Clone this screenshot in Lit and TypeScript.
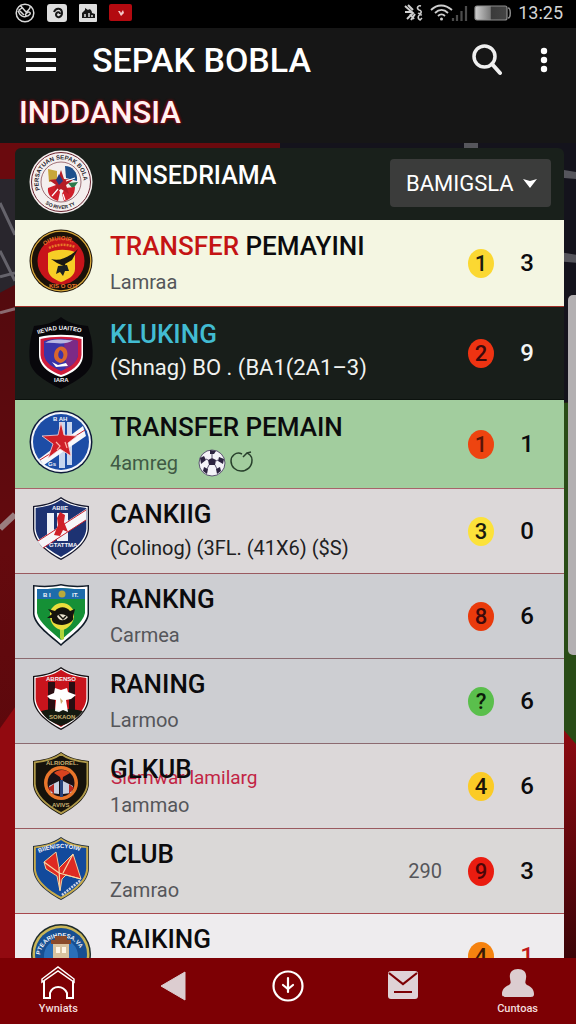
import { LitElement, html, svg, css, nothing, TemplateResult } from "lit";
import { customElement, property } from "lit/decorators.js";

type CrestKind =
  | "star" | "sun" | "night" | "north" | "sash"
  | "green" | "red" | "ember" | "wing" | "tower";

interface Entry {
  name: string;
  lead?: string;
  sub?: string;
  overlay?: string;
  extra?: string;
  ball?: boolean;
  crest: CrestKind;
  tone: string;
  rank: string;
  color: string;
  ink: string;
  score: string;
}

const SHIELD = "M32 2C24 8 13 10 4 11V34C5 48 19 58 32 65C45 58 59 48 60 34V11C51 10 40 8 32 2Z";
const BIG_SHIELD = "M32 0C25 6 15 8 5 9L2 20C0 30 0 38 1 46C4 58 20 66 32 72C44 66 60 58 63 46C64 38 64 30 62 20L59 9C49 8 39 6 32 0Z";

const CRESTS: Record<CrestKind, TemplateResult> = {
  star: svg`
    <circle cx="32" cy="34" r="31.5" fill="#f4efee"/>
    <circle cx="32" cy="34" r="29.5" fill="none" stroke="#6b2430" stroke-width="1"/>
    <circle cx="32" cy="34" r="20" fill="none" stroke="#7a3a44" stroke-width=".7"/>
    <path id="ring-top" d="M11 42A22.500 22.500 0 1 1 53 42" fill="none"/>
    <text class="ring dark"><textPath href="#ring-top">PERSATUAN SEPAK BOLA</textPath></text>
    <path id="ring-low" d="M14 54A27 27 0 0 0 50 54" fill="none"/>
    <text class="ring dark small"><textPath href="#ring-low" startOffset="3">SO RIVER TY</textPath></text>
    <path d="M19 21L28 23L28 32L20 34Z" fill="#c7a63a"/>
    <path d="M36 18C43 18 49 24 48 33L37 30Z" fill="#1c4f8c"/>
    <path d="M39 35L49 34L44 41Z" fill="#2c7a4a"/>
    <path d="M19 40L27 37L31 44L29 53C22 51 18 46 19 40Z" fill="#cf1f2a"/>
    <path d="M36 40L46 39C46 47 41 52 35 53L33 46Z" fill="#cf1f2a"/>
    <path d="M32 22L35 31L44 32L37 37L40 46L32 41L24 46L27 37L20 32L29 31Z" fill="#b51c26"/>
    <path d="M30 26L34 33L30 37L27 32Z" fill="#23387c"/>
    <path d="M37 33L46 30M23 48L29 41M34 46L36 52" stroke="#fff" stroke-width="1.200"/>`,
  sun: svg`
    <circle cx="32" cy="34" r="31.500" fill="#1b1209"/>
    <circle cx="32" cy="34" r="29.800" fill="none" stroke="#d8a83a" stroke-width="1.300"/>
    <circle cx="32" cy="34" r="23.500" fill="#c8141a"/>
    <path id="sun-arc" d="M14 20A27 27 0 0 1 52 22" fill="none"/>
    <text class="ring orange"><textPath href="#sun-arc" startOffset="2">OIMUIOIR.</textPath></text>
    <path d="M20 21C28 17 38 17 46 20" stroke="#e87a28" stroke-width="2.500" fill="none" stroke-dasharray="2 1"/>
    <path d="M19 26C27 22 38 22 46 25V42C46 49 38 53 32 55C26 53 19 49 19 42Z" fill="#f7ce26"/>
    <path d="M22 32C30 34 38 32 49 22L43 33L36 37L37 40L28 36Z" fill="#191812"/>
    <path d="M29 39L38 38L40 44L36 44L34 49L31 45L27 47Z" fill="#1c2222"/>
    <text class="ring orange" x="20" y="61">KIS O OTI</text>`,
  night: svg`
    <path d="${BIG_SHIELD}" fill="#08070b"/>
    <path d="M10 20C22 17 42 17 54 20V38C54 50 42 57 32 60C22 57 10 50 10 38Z" fill="#fff"/>
    <path d="M11.500 22C24 19 40 19 52.500 22V38C52 48 41 55 32 58C23 55 12 48 11.500 38Z" fill="#d01c3c"/>
    <path d="M15 24C25 21 39 21 49 24V38C48 46 39 51 32 54C25 51 16 46 15 38Z" fill="#3a33a8"/>
    <path d="M36 22C42 22 46 23 49 24V38C48 45 41 50 36 52C40 42 33 34 36 22Z" fill="#7c2a86"/>
    <path d="M16 26C24 20 36 24 44 23C36 29 25 25 16 26Z" fill="#b8b6e2"/>
    <path d="M26 34C29 28 36 28 38 34C40 41 35 46 31 46C25 44 24 39 26 34ZM31 33C28 37 29 42 33 42C36 38 34 34 31 33Z" fill="#d9662c"/>
    <path d="M23 45L29 48L37 46L39 49L27 50Z" fill="#fff"/>
    <path id="night-top" d="M7 18Q32 8 60 18" fill="none"/>
    <text class="ring white"><textPath href="#night-top" startOffset="2">IIEVAD UAITEO</textPath></text>
    <text class="ring white" x="25" y="65">IARA</text>`,
  north: svg`
    <circle cx="32" cy="34" r="31.500" fill="#0d1a3a"/>
    <circle cx="32" cy="34" r="30" fill="#f4f6fa"/>
    <circle cx="32" cy="34" r="28" fill="#1d4da6"/>
    <path d="M30 14H36V60H30ZM38 14H43V57H38Z" fill="#e8eefa" opacity=".85"/>
    <path d="M10 51L54 18L57 28L15 57Z" fill="#f8f8fb"/>
    <path d="M11 52L27 42M40 32L56 22" stroke="#c8202c" stroke-width="1"/>
    <path d="M32 14L35 27L48 28L39 35L42 48L31 41L19 50L24 36L13 28L29 27Z" fill="#cf1f28" stroke="#f4d8dc" stroke-width=".8"/>
    <path d="M27 34L31 38L28 42M36 34L38 40" stroke="#ffb3a8" stroke-width="1.200" fill="none"/>
    <text class="ring white" x="24" y="13">B AH</text>
    <text class="ring white" x="19" y="58">Gs</text>`,
  sash: svg`
    <path d="${SHIELD}" fill="#14162c"/>
    <path d="${SHIELD}" fill="#fff" transform="translate(1.500 1.500) scale(.953)"/>
    <path d="${SHIELD}" fill="#1d3272" transform="translate(3 3) scale(.906)"/>
    <path d="M18 18H25V44H18ZM28 18H39V46H28Z" fill="#eef1f8"/>
    <path d="M8 46L57 14V25L14 53Z" fill="#f7f5f8"/>
    <path d="M9 46L57 15M14 53L57 25" stroke="#c8202c" stroke-width="1"/>
    <path d="M31 17L36 20L35 27L39 37L34 35L31 41L25 40L29 30L28 23Z" fill="#cf1f28"/>
    <text class="ring white" x="23" y="15">ABIIE</text>
    <text class="ring white" x="20" y="52">GTATTMA</text>`,
  green: svg`
    <path d="M32 4C23 6 13 6 4 5V34C5 46 22 57 32 66C42 57 59 46 60 34V5C51 6 41 6 32 4Z" fill="#101b28"/>
    <path d="M32 5.500C23 7.500 13 7.500 5.500 6.500V34C7 45 22 55 32 64C42 55 57 45 58.500 34V6.500C51 7.500 41 7.500 32 5.500Z" fill="#fff"/>
    <path d="M32 8C23 9 14 9 8 9V33C10 43 23 52 32 60C41 52 54 43 56 33V9C50 9 41 9 32 8Z" fill="#159036"/>
    <path d="M32 8C23 9 14 9 8 9V19H56V9C50 9 41 9 32 8Z" fill="#1d6cab"/>
    <circle cx="33" cy="14" r="3.500" fill="#b7a93b"/>
    <text class="ring white" x="14" y="17">B I</text>
    <text class="ring white" x="43" y="17">IT.</text>
    <path d="M31 46L35 46V59L33 60L31 58Z" fill="#b0d43a"/>
    <path d="M33 23C40 23 46 29 45 36C45 43 39 49 33 50C26 49 21 43 21 36C20 29 26 23 33 23Z" fill="#e9dd3c"/>
    <path d="M19 29L26 31C30 26 37 26 41 31L46 29L44 37C46 41 38 45 33 45C25 45 22 41 23 38L18 38L23 34Z" fill="#15140d"/>
    <path d="M28 36C31 33 36 34 39 37C35 42 30 41 28 36Z" fill="#ece5cf"/>
    <path d="M30 35L34 39L37 36" stroke="#15140d" stroke-width="1.500" fill="none"/>`,
  red: svg`
    <path d="${SHIELD}" fill="#141014"/>
    <path d="${SHIELD}" fill="#fff" transform="translate(1.500 1.500) scale(.953)"/>
    <path d="${SHIELD}" fill="#c8141c" transform="translate(3 3) scale(.906)"/>
    <path d="M19 17H26V50H19ZM40 17H46V50H40Z" fill="#2a0d12"/>
    <path d="M12 46C24 43 40 43 54 46C49 53 40 58 32 61C24 58 16 54 12 46Z" fill="#141a10"/>
    <path d="M18 31L25 28L26 23L32 25L38 23L39 27L47 30L42 34L37 35L39 47L34 45L30 47L26 46L27 35L21 34Z" fill="#fff"/>
    <path d="M31 33L34 36L32 39Z" fill="#c8a870"/>
    <text class="ring white" x="17" y="16">ABRENSO</text>
    <text class="ring tan" x="20" y="54">SOKAON</text>`,
  ember: svg`
    <path d="${SHIELD}" fill="#15120b"/>
    <path d="${SHIELD}" fill="none" stroke="#b09a4a" stroke-width="2" transform="translate(2 2) scale(.94)"/>
    <text class="ring tan" x="17" y="15">ALRIOREL.</text>
    <circle cx="32" cy="33" r="17" fill="#e8752a"/>
    <circle cx="32" cy="33" r="13.500" fill="#181016"/>
    <path d="M25 23C29 19 37 19 41 23L34 27L33 33L31 27Z" fill="#d8421f"/>
    <path d="M20 36L30 31V44L22 43Z" fill="#c8cfe0"/>
    <path d="M44 36L34 31V44L42 43Z" fill="#c8cfe0"/>
    <path d="M31 30H34V47H31Z" fill="#27437c"/>
    <path d="M19 38L25 34V44ZM45 38L40 34V44Z" fill="#b52620"/>
    <text class="ring tan" x="23" y="57">AVIVS</text>`,
  wing: svg`
    <path d="${SHIELD}" fill="#1c2a3c"/>
    <path d="${SHIELD}" fill="#c8ac4c" transform="translate(1 1) scale(.97)"/>
    <path d="${SHIELD}" fill="#124a9c" transform="translate(3.200 3.200) scale(.9)"/>
    <path id="wing-top" d="M10 18Q32 8 56 18" fill="none"/>
    <text class="ring white"><textPath href="#wing-top">BIIENISCYOIW</textPath></text>
    <path d="M15 27L27 17L30 33L44 19L52 44L37 40L33 44L31 56L28 41L17 34Z" fill="#df2a22" stroke="#f0cf9c" stroke-width="1"/>
    <path d="M15 27L30 38L52 44M30 33L31 55M44 19L34 38" stroke="#f7d9a8" stroke-width="1.200" fill="none"/>
    <path d="M33 60L52 45" stroke="#cfd4e4" stroke-width="2.500" stroke-dasharray="2 1"/>`,
  tower: svg`
    <circle cx="32" cy="34" r="30" fill="#1c2a2c"/>
    <circle cx="32" cy="34" r="28.500" fill="#c9b659"/>
    <circle cx="32" cy="34" r="26" fill="#174f92"/>
    <path id="tower-top" d="M11 38A21 21 0 1 1 53 38" fill="none"/>
    <text class="ring white"><textPath href="#tower-top" startOffset="3">PTEARIHDESA.VA</textPath></text>
    <circle cx="32" cy="36" r="17" fill="#2a6fba"/>
    <path d="M24 22H40V52H24Z" fill="#d9c3a0"/>
    <path d="M22 20H42V24H22ZM26 16H38V20H26Z" fill="#8a4a2a"/>
    <path d="M27 27H31V33H27ZM33 27H37V33H33Z" fill="#fff6e6"/>`,
};

const ENTRIES: Entry[] = [
  { lead: "TRANSFER", name: "PEMAYINI", sub: "Lamraa", crest: "sun", tone: "cream", rank: "1", color: "#fbd832", ink: "#1c1c10", score: "3" },
  { name: "KLUKING", sub: "(Shnag) BO . (BA1(2A1–3)", crest: "night", tone: "night", rank: "2", color: "#ee3312", ink: "#3a0a0c", score: "9" },
  { name: "TRANSFER PEMAIN", sub: "4amreg", ball: true, crest: "north", tone: "mint", rank: "1", color: "#ee4410", ink: "#5a1408", score: "1" },
  { name: "CANKIIG", sub: "(Colinog) (3FL. (41X6) ($S)", crest: "sash", tone: "rose strong", rank: "3", color: "#fce23a", ink: "#1c1c10", score: "0" },
  { name: "RANKNG", sub: "Carmea", crest: "green", tone: "steel", rank: "8", color: "#e93a0c", ink: "#3a0a0c", score: "6" },
  { name: "RANING", sub: "Larmoo", crest: "red", tone: "steel", rank: "?", color: "#5abf4c", ink: "#0c1c0a", score: "6" },
  { name: "GLKUB", overlay: "Slemwar lamilarg", sub: "1ammao", crest: "ember", tone: "rose", rank: "4", color: "#fbcb26", ink: "#1c1408", score: "6" },
  { name: "CLUB", sub: "Zamrao", extra: "290", crest: "wing", tone: "ash", rank: "9", color: "#ea1c10", ink: "#4a0608", score: "3" },
  { name: "RAIKING", sub: "Lamrao", crest: "tower", tone: "snow", rank: "4", color: "#f5820f", ink: "#3a1806", score: "1" },
];

@customElement("club-crest")
class ClubCrest extends LitElement {
  @property() kind: CrestKind = "star";

  static styles = css`
    :host { display: block; width: 64px; height: 72px; }
    svg { display: block; width: 64px; height: 72px; overflow: visible; }
    .ring { font: 700 6px "Liberation Sans", sans-serif; }
    .small { font-size: 5px; }
    .dark { fill: #26222a; }
    .white { fill: #f5f5fa; }
    .orange { fill: #e8752a; }
    .tan { fill: #c8b070; }
  `;

  render() {
    return html`<svg viewBox="0 0 64 72" aria-hidden="true">${CRESTS[this.kind]}</svg>`;
  }
}

@customElement("club-row")
class ClubRow extends LitElement {
  @property({ attribute: false }) entry!: Entry;

  static styles = css`
    :host { display: block; }
    .row {
      display: flex;
      align-items: center;
      padding: 6px 22px 6px 14px;
      border-bottom: 1px solid #a8636a;
      color: #0b0b0d;
    }
    .cream { background: #f4f6e2; padding-block: 7px; border-color: #a03028; }
    .night { background: #181e1a; padding-block: 10px; color: #f4f6f4; border-color: #0c120e; }
    .mint { background: #a2cd9e; padding-block: 8px; }
    .rose { background: #dcd8d9; border-color: #9a5a60; }
    .steel { background: #cdced2; border-color: #8c6a70; }
    .ash { background: #dad8d7; border-color: #a8484e; }
    .snow { background: #eeecee; }
    .crest { flex: none; margin-block: -2px; }
    .text { position: relative; flex: 1; min-width: 0; margin-left: 17px; padding-top: 2px; }
    .night .text { padding: 0 0 4px; }
    .strong .text { padding-bottom: 2px; }
    .name { margin: 0; font-size: 26px; font-weight: 500; line-height: 34px; white-space: nowrap; }
    .night .name { color: #42bcd2; }
    .lead { color: #c41414; }
    .sub {
      display: flex;
      align-items: center;
      gap: 20px;
      margin: 2px 0 0;
      font-size: 20px;
      line-height: 34px;
      color: #55565a;
      white-space: nowrap;
    }
    .night .sub { margin-top: 0; color: #f0f2f0; font-size: 22px; }
    .strong .sub { margin-top: 0; color: #202022; font-size: 20px; }
    .mint .sub { color: #3f5a44; }
    .marks { display: flex; align-items: center; gap: 4px; margin-block: -4px; }
    .overlay {
      position: absolute;
      left: 1px;
      top: 15px;
      font-size: 19px;
      line-height: 26px;
      color: #c22444;
      white-space: nowrap;
    }
    .over { position: relative; z-index: 1; }
    .extra { flex: none; margin-right: 26px; font-size: 20px; color: #55565a; }
    .rank {
      flex: none;
      width: 26px;
      height: 29px;
      border-radius: 50%;
      font-size: 22px;
      font-weight: 500;
      line-height: 30px;
      text-align: center;
    }
    .score {
      flex: none;
      width: 30px;
      margin-left: 18px;
      font-size: 24px;
      font-weight: 500;
      text-align: center;
    }
    .snow .score { color: #c01818; }
  `;

  render() {
    const e = this.entry;
    return html`
      <article class="row ${e.tone}">
        <club-crest class="crest" kind=${e.crest}></club-crest>
        <div class="text">
          ${e.overlay ? html`<span class="overlay">${e.overlay}</span>` : nothing}
          <h2 class="name ${e.overlay ? "over" : ""}">${e.lead ? html`<span class="lead">${e.lead}</span> ` : nothing}${e.name}</h2>
          <p class="sub">
            <span>${e.sub}</span>
            ${e.ball ? html`
              <span class="marks">
                <svg width="28" height="28" viewBox="0 0 28 28" aria-hidden="true">
                  <circle cx="14" cy="14" r="13" fill="#f4f3f8" stroke="#5a5470" stroke-width="1"/>
                  <path d="M10 11L14 9L18 11L17 16H11ZM12 1L18 2L16 5L12 5ZM2 9L6 7L8 11L3 15ZM26 10L21 8L20 12L25 15ZM6 18L10 20L9 25L5 22ZM22 18L18 20L19 25L23 22Z" fill="#2c2440"/>
                  <path d="M14 5V9M8 10L10 11M20 11L18 12M11 16L9 20M17 16L19 20" stroke="#5a5470" stroke-width="1"/>
                </svg>
                <svg width="24" height="28" viewBox="0 0 24 28" fill="none" stroke="#28402c" stroke-width="1.500" aria-hidden="true">
                  <path d="M12 5C6 2 1 7 1 12C1 18 6 22 11 22C17 22 22 18 22 11C22 9 21 7 20 6L17 4L13 8M17 4L21 3"/>
                </svg>
              </span>` : nothing}
          </p>
        </div>
        ${e.extra ? html`<span class="extra">${e.extra}</span>` : nothing}
        <span class="rank" style="background:${e.color};color:${e.ink}">${e.rank}</span>
        <span class="score">${e.score}</span>
      </article>`;
  }
}

@customElement("app-root")
class AppRoot extends LitElement {
  static styles = css`
    :host {
      display: flex;
      flex-direction: column;
      height: 100vh;
      overflow: hidden;
      background: #161616;
      font-family: Roboto, "Liberation Sans", sans-serif;
    }
    button { padding: 0; border: 0; background: none; color: inherit; font: inherit; }
    svg { display: block; }
    .status {
      display: flex;
      flex: none;
      align-items: center;
      justify-content: space-between;
      height: 28px;
      padding: 0 13px 0 15px;
      background: #000;
      color: #d4d4d4;
    }
    .group { display: flex; align-items: center; gap: 12px; padding-bottom: 2px; }
    .group.right { gap: 6px; }
    .clock { font-size: 18px; line-height: 26px; }
    .top { flex: none; padding-bottom: 9px; background: #161616; color: #fff; }
    .bar { display: flex; align-items: center; height: 64px; padding: 0 28px 0 26px; }
    .title { flex: 1; margin: 0 0 0 36px; font-size: 34px; font-weight: 500; line-height: 40px; white-space: nowrap; }
    .more { margin-left: 38px; }
    .region {
      margin: 0;
      padding-left: 19px;
      color: #fff3f2;
      font-size: 31px;
      font-weight: 500;
      line-height: 42px;
      text-shadow: 0 0 3px #b00010, 0 0 3px #b00010;
    }
    .main { position: relative; flex: 1; min-height: 0; overflow: hidden; padding: 5px 12px 0 15px; }
    .scene { position: absolute; inset: 0; width: 100%; height: 100%; }
    .card { position: relative; border-radius: 6px 6px 0 0; overflow: hidden; }
    .head {
      display: flex;
      align-items: center;
      padding: 0 13px 0 14px;
      background: #19201b;
      color: #fff;
    }
    .head-name { flex: 1; margin: 0 0 16px 17px; font-size: 25px; font-weight: 500; line-height: 34px; }
    .picker { position: relative; display: flex; align-items: center; padding-bottom: 2px; }
    .select {
      appearance: none;
      width: 161px;
      height: 48px;
      padding: 0 28px 0 16px;
      border: 0;
      border-radius: 4px;
      background: #3b3c3b;
      color: #fff;
      font: 400 22px Roboto, "Liberation Sans", sans-serif;
    }
    .caret { position: absolute; right: 14px; pointer-events: none; }
    .list { margin: 0; padding: 0; list-style: none; }
    .thumb {
      position: absolute;
      right: 0;
      top: 152px;
      width: 8px;
      height: 360px;
      border-radius: 5px 0 0 5px;
      background: #b3b0b2;
    }
    .nav {
      display: grid;
      flex: none;
      grid-template-columns: repeat(5, 1fr);
      height: 66px;
      padding: 0 1px;
      background: #7d0004;
      color: #f3dcdc;
    }
    .tab { display: flex; flex-direction: column; align-items: center; padding-top: 8px; }
    .label { font-size: 11px; font-weight: 500; line-height: 14px; }
  `;

  render() {
    return html`
      <div class="status">
        <div class="group">
          <svg width="20" height="20" viewBox="0 0 20 20" fill="none" stroke="#d8d8d8" stroke-width="1.500">
            <circle cx="10" cy="10" r="8.800"/>
            <path d="M5 2L11 9C14 7 16 4 15 3M3 8C5 13 9 15 12 13M12 10C9 11 11 15 14 12C17 10 14 8 12 10M7 5L4 7L9 12"/>
          </svg>
          <svg width="20" height="18" viewBox="0 0 20 18">
            <rect width="20" height="18" rx="3" fill="#dedede"/>
            <path d="M7 8C9 3 15 4 15 9C15 13 10 15 9 11C9 8 13 7 13 10" fill="none" stroke="#161616" stroke-width="2"/>
          </svg>
          <svg width="18" height="18" viewBox="0 0 18 18">
            <rect width="18" height="18" rx="1" fill="#dedede"/>
            <path d="M3 14V9L6 6V4L9 6C11 4 13 7 13 9L16 10V14Z" fill="#161616"/>
            <path d="M6 10V13M10 9V13M13 11V13" stroke="#dedede" stroke-width="1.500"/>
          </svg>
          <svg width="23" height="18" viewBox="0 0 23 18">
            <rect width="23" height="17" rx="2" fill="#b30a10"/>
            <path d="M9 7L11 7L12 9L14 6L15 9L12 12Z" fill="#f3c8c8"/>
          </svg>
        </div>
        <div class="group right">
          <svg width="20" height="18" viewBox="0 0 20 18" fill="none" stroke="#d0d0d0" stroke-width="2">
            <path d="M1 2L9 9L3 15M4 1L9 6M1 8H8M7 16L11 10M6 10L10 15"/>
            <path d="M17 2C14 1 12 4 15 6C19 7 17 11 14 9M18 11C14 10 13 14 16 16L18 14" stroke-width="1.500"/>
          </svg>
          <svg width="38" height="18" viewBox="0 0 38 18" fill="none" stroke="#cfcfcf" stroke-width="1.800">
            <path d="M1 6C7 0 15 0 22 6M5 9C9 5 14 5 18 9M8 12C10 10 13 10 15 12"/>
            <circle cx="11.500" cy="15" r="1.500" fill="#cfcfcf" stroke="none"/>
            <path d="M23 17V14M27 17V11M31.500 17V7M36 17V2" stroke="#4c4c4c" stroke-width="2.200"/>
          </svg>
          <svg width="38" height="16" viewBox="0 0 38 16">
            <defs><linearGradient id="charge"><stop offset="0" stop-color="#d0d0d0"/><stop offset=".48" stop-color="#7a7a7a"/><stop offset=".5" stop-color="#3a3a3a"/><stop offset="1" stop-color="#444"/></linearGradient></defs>
            <rect x="1" y="1" width="32" height="14" rx="2" fill="url(#charge)" stroke="#8c8c8c" stroke-width="1.200"/>
            <path d="M34 3C37 3 37 13 34 13" fill="none" stroke="#8c8c8c" stroke-width="1.500"/>
          </svg>
          <time class="clock">13:25</time>
        </div>
      </div>

      <header class="top">
        <div class="bar">
          <button aria-label="Menu">
            <svg width="30" height="24" viewBox="0 0 30 24" fill="#fff"><path d="M0 0H30V4H0ZM0 10H30V14H0ZM0 19H30V23H0Z"/></svg>
          </button>
          <h1 class="title">SEPAK BOBLA</h1>
          <button aria-label="Search">
            <svg width="30" height="32" viewBox="0 0 30 32" fill="none" stroke="#efefef">
              <circle cx="12.500" cy="12.500" r="10.500" stroke-width="3.500"/>
              <path d="M20 20L28 29" stroke-width="4" stroke-linecap="round"/>
            </svg>
          </button>
          <button class="more" aria-label="More">
            <svg width="8" height="26" viewBox="0 0 8 26" fill="#fff"><circle cx="4" cy="4" r="3.200"/><circle cx="4" cy="13" r="3.200"/><circle cx="4" cy="22" r="3.200"/></svg>
          </button>
        </div>
        <p class="region">INDDANSIA</p>
      </header>

      <main class="main">
        <svg class="scene" viewBox="0 0 576 816" preserveAspectRatio="none" aria-hidden="true">
          <defs>
            <linearGradient id="wall" x2="0" y2="1"><stop offset="0" stop-color="#4a0a0e"/><stop offset=".5" stop-color="#640a0e"/><stop offset="1" stop-color="#54060a"/></linearGradient>
            <linearGradient id="edge" x2="0" y2="1"><stop offset="0" stop-color="#8c0a10"/><stop offset="1" stop-color="#3c0408"/></linearGradient>
          </defs>
          <rect width="576" height="816" fill="url(#wall)"/>
          <path d="M0 0H280V36H0Z" fill="#6a0a0e"/>
          <path d="M280 0H576V260H280Z" fill="#14131c"/>
          <path d="M464 0H478V5H464Z" fill="#56565c"/>
          <path d="M564 27L576 29V36L564 35ZM564 110L576 112V120L564 119Z" fill="#55555c"/>
          <path d="M0 36H15V142L0 150Z" fill="#29262d"/>
          <path d="M0 60L15 92M0 108L15 138M0 134L15 130" stroke="#65636b" stroke-width="3"/>
          <path d="M0 170L15 166" stroke="#8a6a70" stroke-width="3"/>
          <path d="M0 386L15 372" stroke="#a89a9c" stroke-width="6" opacity=".8"/>
          <path d="M0 586L15 565V816H0Z" fill="#920a10"/>
          <path d="M564 260H576V602L564 590Z" fill="#294c16"/>
          <path d="M564 588L576 602V816H564Z" fill="url(#edge)"/>
        </svg>
        <section class="card">
          <div class="head">
            <club-crest kind="star"></club-crest>
            <h2 class="head-name">NINSEDRIAMA</h2>
            <div class="picker">
              <select class="select" aria-label="League"><option>BAMIGSLA</option></select>
              <svg class="caret" width="14" height="10" viewBox="0 0 14 10" fill="#fff"><path d="M0 1L7 3L14 1L7 10Z"/></svg>
            </div>
          </div>
          <ul class="list">
            ${ENTRIES.map((entry) => html`<li><club-row .entry=${entry}></club-row></li>`)}
          </ul>
        </section>
        <div class="thumb"></div>
      </main>

      <nav class="nav">
        <button class="tab">
          <svg width="34" height="36" viewBox="0 0 34 36" fill="none" stroke="#fff" stroke-width="2">
            <path d="M1 13L17 1L33 13V16L17 5L1 16Z" stroke-width="1.500"/>
            <path d="M3 15V32H9V27C12 19 22 19 26 27V32H32V15"/>
          </svg>
          <span class="label">Ywniats</span>
        </button>
        <button class="tab" aria-label="Back">
          <svg width="28" height="40" viewBox="0 0 28 40"><path d="M26 6V34L2 20Z" fill="#dccdd0" stroke="#dccdd0" stroke-linejoin="round"/></svg>
        </button>
        <button class="tab" aria-label="Recent">
          <svg width="34" height="40" viewBox="0 0 34 40" fill="none" stroke="#fff" stroke-width="2.200">
            <circle cx="17" cy="20" r="14.500"/><path d="M17 12V26M12 19L17 23L22 19" stroke-linecap="round"/>
          </svg>
        </button>
        <button class="tab" aria-label="Mail">
          <svg width="32" height="40" viewBox="0 0 32 40">
            <rect x="1" y="5" width="30" height="28" rx="3" fill="#dfd2d6"/>
            <path d="M2 7L16 18L30 7M7 26H25" fill="none" stroke="#7d0004" stroke-width="2.200"/>
          </svg>
        </button>
        <button class="tab">
          <svg width="34" height="36" viewBox="0 0 34 36" fill="#dccdd0">
            <path d="M17 3C23 3 26 7 25 12C25 15 23 17 26 19C31 21 33 24 33 28C33 31 31 31 28 31H6C3 31 1 31 1 28C1 24 3 21 8 19C11 17 9 15 9 12C8 7 11 3 17 3Z"/>
          </svg>
          <span class="label">Cuntoas</span>
        </button>
      </nav>`;
  }
}
